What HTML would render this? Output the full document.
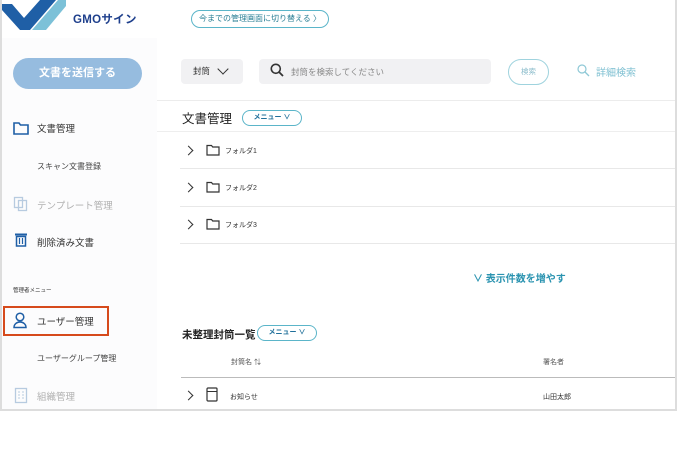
<!DOCTYPE html>
<html><head><meta charset="utf-8"><style>
*{box-sizing:border-box;margin:0;padding:0}
body{width:678px;height:475px;background:#fff;font-family:"Liberation Sans","Noto Sans CJK JP",sans-serif;position:relative;overflow:hidden;color:#333}
.frame{position:absolute;left:0;top:0;width:678px;height:411px;background:#fff;overflow:hidden}
.abs{position:absolute}
.side{left:2px;top:38px;width:155px;height:371px;background:#fcfcfd}
.t{position:absolute;white-space:nowrap}
.row{position:absolute;left:180px;right:3px;height:1px;background:#e8e8e8}
.chev{position:absolute;width:7px;height:7px;border-right:1.6px solid #333;border-top:1.6px solid #333;transform:rotate(45deg)}
</style></head><body>
<div class="frame">
 <svg class="abs" style="left:2px;top:0" width="64" height="34"><polygon points="0,4 10,4 22,18 38,0 54,0 28,30 18,30 0,10" fill="#1f5fa6"/><polygon points="30,30 56,0 64,0 64,6 44,30" fill="#7cc1d8"/></svg>
 <div class="t" style="left:73px;top:11px;font-size:11.5px;font-weight:bold;color:#1e3f8c;letter-spacing:0.3px">GMOサイン</div>
 <div class="t" style="left:191px;top:10px;width:138px;height:18px;border:1px solid #5bb5c9;border-radius:9px;font-size:8px;line-height:16px;text-align:center;color:#2a7f95">今までの管理画面に切り替える 〉</div>
 <div class="abs side"></div>
 <div class="t" style="left:13px;top:58px;width:129px;height:31px;background:#96bcdf;border-radius:16px;color:#fff;font-size:11px;font-weight:bold;text-align:center;line-height:31px">文書を送信する</div>
 <svg class="abs" style="left:13px;top:121px" width="16" height="14"><path d="M1 2h5l1.5 2H15v9H1z" fill="none" stroke="#1f5fa6" stroke-width="1.6"/></svg>
 <div class="t" style="left:37px;top:121px;font-size:9.5px">文書管理</div>
 <div class="t" style="left:37px;top:161px;font-size:8px;color:#444">スキャン文書登録</div>
 <svg class="abs" style="left:13px;top:196px" width="16" height="16"><rect x="1.5" y="1.5" width="8" height="10" fill="none" stroke="#b7cbe0" stroke-width="1.3"/><rect x="5.5" y="4.5" width="8" height="10" fill="none" stroke="#b7cbe0" stroke-width="1.3"/></svg>
 <div class="t" style="left:37px;top:198px;font-size:9.5px;color:#b0b0b0">テンプレート管理</div>
 <svg class="abs" style="left:14px;top:232px" width="14" height="15"><rect x="1" y="1.5" width="12" height="2" fill="#1f5fa6"/><path d="M2.5 4.5h9v9.5h-9z" fill="none" stroke="#1f5fa6" stroke-width="1.5"/><path d="M5.5 6v6M8.5 6v6" stroke="#1f5fa6" stroke-width="1.2"/></svg>
 <div class="t" style="left:37px;top:235px;font-size:9.5px">削除済み文書</div>
 <div class="t" style="left:13px;top:286px;font-size:5.5px;color:#333">管理者メニュー</div>
 <div class="abs" style="left:3px;top:306px;width:106px;height:30px;border:2px solid #d64a1c"></div>
 <svg class="abs" style="left:13px;top:312px" width="14" height="17"><circle cx="7" cy="5" r="3.8" fill="none" stroke="#1f5fa6" stroke-width="1.5"/><path d="M1 15.5c0-3.5 3-5.5 6-5.5s6 2 6 5.5z" fill="none" stroke="#1f5fa6" stroke-width="1.5"/></svg>
 <div class="t" style="left:37px;top:314px;font-size:9.5px">ユーザー管理</div>
 <div class="t" style="left:37px;top:353px;font-size:8px;color:#444">ユーザーグループ管理</div>
 <svg class="abs" style="left:14px;top:387px" width="14" height="17"><rect x="1.5" y="1.5" width="11" height="14" fill="none" stroke="#b7cbe0" stroke-width="1.3"/><path d="M4 5h2M8 5h2M4 8h2M8 8h2M4 11h2M8 11h2" stroke="#b7cbe0"/></svg>
 <div class="t" style="left:37px;top:389px;font-size:9.5px;color:#b0b0b0">組織管理</div>
 <div class="t" style="left:181px;top:59px;width:62px;height:25px;background:#f1f1f3;border-radius:4px;font-size:8.5px;line-height:25px;padding-left:12px">封筒</div>
 <div class="abs" style="left:219px;top:65px;width:8px;height:8px;border-right:1.6px solid #333;border-bottom:1.6px solid #333;transform:rotate(45deg)"></div>
 <div class="abs" style="left:259px;top:59px;width:232px;height:25px;background:#f1f1f3;border-radius:4px"></div>
 <svg class="abs" style="left:270px;top:63px" width="14" height="14"><circle cx="5.8" cy="5.8" r="4.5" fill="none" stroke="#333" stroke-width="1.6"/><path d="M9 9l4 4" stroke="#333" stroke-width="1.8"/></svg>
 <div class="t" style="left:291px;top:66px;font-size:8.5px;color:#888">封筒を検索してください</div>
 <div class="t" style="left:508px;top:59px;width:41px;height:26px;border:1px solid #9fd3de;border-radius:13px;font-size:7.5px;line-height:24px;text-align:center;color:#8bbccb">検索</div>
 <svg class="abs" style="left:577px;top:64px" width="13" height="13"><circle cx="5" cy="5" r="4" fill="none" stroke="#8ec8d6" stroke-width="1.2"/><path d="M8 8l4 4" stroke="#8ec8d6" stroke-width="1.3"/></svg>
 <div class="t" style="left:596px;top:64px;font-size:10px;color:#7fc0d2">詳細検索</div>
 <div class="abs" style="left:157px;top:100px;width:518px;height:1px;background:#ececec"></div>
 <div class="t" style="left:182px;top:108px;font-size:12.5px;color:#222">文書管理</div>
 <div class="t" style="left:242px;top:110px;width:60px;height:16px;border:1px solid #5bb5c9;border-radius:8px;font-size:7px;font-weight:bold;line-height:14px;text-align:center;color:#1f6f9a">メニュー ∨</div>
 <div class="row" style="top:131px;left:157px;background:#eee"></div>
 <div class="chev" style="left:185px;top:147px"></div>
 <svg class="abs" style="left:206px;top:144px" width="14" height="12"><path d="M1 1.5h4.5l1.2 1.5H13v8H1z" fill="none" stroke="#333" stroke-width="1.2"/></svg>
 <div class="t" style="left:225px;top:146px;font-size:7px">フォルダ1</div>
 <div class="row" style="top:168px"></div>
 <div class="chev" style="left:185px;top:184px"></div>
 <svg class="abs" style="left:206px;top:181px" width="14" height="12"><path d="M1 1.5h4.5l1.2 1.5H13v8H1z" fill="none" stroke="#333" stroke-width="1.2"/></svg>
 <div class="t" style="left:225px;top:183px;font-size:7px">フォルダ2</div>
 <div class="row" style="top:206px"></div>
 <div class="chev" style="left:185px;top:221px"></div>
 <svg class="abs" style="left:206px;top:218px" width="14" height="12"><path d="M1 1.5h4.5l1.2 1.5H13v8H1z" fill="none" stroke="#333" stroke-width="1.2"/></svg>
 <div class="t" style="left:225px;top:220px;font-size:7px">フォルダ3</div>
 <div class="row" style="top:243px"></div>
 <div class="t" style="left:473px;top:270px;font-size:10px;font-weight:bold;color:#2a93b0">∨ 表示件数を増やす</div>
 <div class="t" style="left:182px;top:327px;font-size:10.5px;font-weight:bold;color:#222">未整理封筒一覧</div>
 <div class="t" style="left:257px;top:325px;width:60px;height:16px;border:1px solid #5bb5c9;border-radius:8px;font-size:7px;font-weight:bold;line-height:14px;text-align:center;color:#1f6f9a">メニュー ∨</div>
 <div class="t" style="left:231px;top:357px;font-size:7px;color:#555">封筒名 ⇅</div>
 <div class="t" style="left:543px;top:357px;font-size:7px;color:#555">署名者</div>
 <div class="abs" style="left:181px;top:377px;width:494px;height:1px;background:#bbb"></div>
 <div class="chev" style="left:185px;top:392px"></div>
 <svg class="abs" style="left:206px;top:387px" width="12" height="15"><rect x="1" y="1" width="10" height="13" rx="1" fill="none" stroke="#333" stroke-width="1.2"/><path d="M1 4.5h10" stroke="#333"/></svg>
 <div class="t" style="left:230px;top:392px;font-size:7px">お知らせ</div>
 <div class="t" style="left:543px;top:392px;font-size:7px">山田太郎</div>
 <div class="abs" style="left:0;top:0;width:2px;height:411px;background:#ddd"></div>
 <div class="abs" style="left:675px;top:0;width:2px;height:411px;background:#ddd"></div>
 <div class="abs" style="left:0;top:409px;width:677px;height:2px;background:#ddd"></div>
</div>
</body></html>
